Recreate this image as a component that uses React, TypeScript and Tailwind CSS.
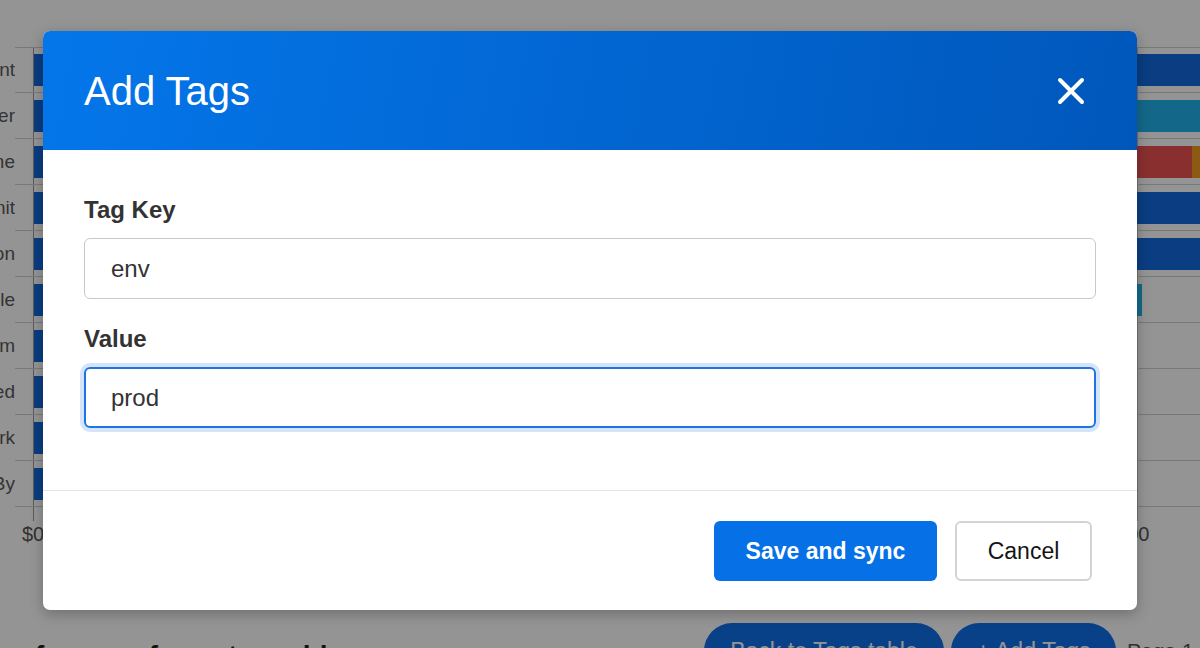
type Segment = { color: string; width: number };
type Row = { label: string; segments: Segment[] };

// stacked bars, widths in px from the axis
const rows: Row[] = [
  { label: 'Environment', segments: [{ color: 'bg-[#1269e0]', width: 1300 }] },
  { label: 'Owner', segments: [{ color: 'bg-[#1269e0]', width: 500 }, { color: 'bg-[#22b4ec]', width: 800 }] },
  {
    label: 'AvailabilityZone',
    segments: [
      { color: 'bg-[#1269e0]', width: 600 },
      { color: 'bg-[#ee5252]', width: 558 },
      { color: 'bg-[#f39c24]', width: 140 },
    ],
  },
  { label: 'BusinessUnit', segments: [{ color: 'bg-[#1269e0]', width: 1300 }] },
  { label: 'Application', segments: [{ color: 'bg-[#1269e0]', width: 1300 }] },
  { label: 'Lifecycle', segments: [{ color: 'bg-[#1269e0]', width: 700 }, { color: 'bg-[#22b4ec]', width: 408 }] },
  { label: 'Team', segments: [{ color: 'bg-[#1269e0]', width: 820 }] },
  { label: 'Untagged', segments: [{ color: 'bg-[#1269e0]', width: 640 }] },
  { label: 'Network', segments: [{ color: 'bg-[#1269e0]', width: 520 }] },
  { label: 'CreatedBy', segments: [{ color: 'bg-[#1269e0]', width: 380 }] },
];

const gridline =
  'bg-[linear-gradient(to_right,transparent_1103px,#c4c4c4_1103px,#c4c4c4_1104px,transparent_1104px)]';

function TagsChart() {
  return (
    <div className="pt-[47px]">
      {rows.map((row, i) => (
        <div key={row.label} className="flex h-[46px]">
          <div className="flex w-[135px] shrink-0 items-center justify-end overflow-hidden whitespace-nowrap text-[19px] text-[#5a5a5a]">
            {row.label}
          </div>
          <div
            className={`flex flex-1 border-b border-[#cfcfcf] ${i === 0 ? 'border-t' : ''}`}
          >
            <div className="w-[18px] shrink-0" />
            <div className={`flex flex-1 items-center border-l border-[#9a9a9a] ${gridline}`}>
              {row.segments.map((seg, j) => (
                <div key={j} className={`h-[32px] shrink-0 ${seg.color}`} style={{ width: seg.width }} />
              ))}
            </div>
          </div>
        </div>
      ))}
      <div className="flex h-[14px]">
        <div className="w-[153px] shrink-0" />
        <div className={`flex-1 border-l border-[#9a9a9a] ${gridline}`} />
      </div>
      <div className="flex text-[20px] leading-[26px] text-[#555]">
        <div className="w-[142px] shrink-0" />
        <span className="w-[1083px] shrink-0">$0</span>
        <span>$100</span>
      </div>
    </div>
  );
}

function PageFooter() {
  return (
    <div className="mt-[76px] flex items-start">
      <h3 className="w-[824px] shrink-0 whitespace-nowrap pt-[16px] text-[28px] font-bold leading-[34px] text-[#1f1f1f]">
        Top costs of names for untaggable resources
      </h3>
      <div className="flex shrink-0 items-center gap-[7px]">
        <button className="h-[56px] w-[240px] shrink-0 rounded-full bg-[#1170ea] text-[23px] text-white">
          Back to Tags table
        </button>
        <button className="h-[56px] w-[165px] shrink-0 rounded-full bg-[#1170ea] text-[23px] text-white">
          + Add Tags
        </button>
        <span className="ml-[4px] shrink-0 whitespace-nowrap text-[21px] text-[#555]">Page 1 of 3</span>
      </div>
    </div>
  );
}

function CloseIcon() {
  return (
    <svg width="28" height="28" viewBox="0 0 28 28" fill="none" stroke="white" strokeWidth="4" strokeLinecap="round">
      <path d="M3 3 L25 25 M25 3 L3 25" />
    </svg>
  );
}

function AddTagsModal() {
  return (
    <div className="ml-[43px] w-[1094px] overflow-hidden rounded-[7px] bg-white shadow-[0_4px_14px_rgba(0,0,0,0.25)]">
      <div className="flex h-[119px] items-center justify-between bg-[linear-gradient(100deg,#0476ea,#0057bb)] pl-[41px] pr-[52px]">
        <h2 className="text-[40px] font-normal leading-none text-white">Add Tags</h2>
        <CloseIcon />
      </div>

      <div className="px-[41px] pb-[62px] pt-[44px]">
        <label className="mb-[12px] block text-[24px] font-bold leading-[32px] text-[#333]">Tag Key</label>
        <input
          readOnly
          value="env"
          className="block h-[61px] w-full rounded-[6px] border border-[#c9c9c9] px-[26px] text-[24px] text-[#333] outline-none"
        />
        <label className="mb-[12px] mt-[24px] block text-[24px] font-bold leading-[32px] text-[#333]">Value</label>
        <input
          readOnly
          value="prod"
          className="block h-[61px] w-full rounded-[6px] border-2 border-[#1f73e3] px-[25px] text-[24px] text-[#333] outline-none ring-4 ring-[#d3e4fb]"
        />
      </div>

      <div className="flex justify-end gap-[18px] border-t border-[#e4e4e4] pb-[29px] pl-[41px] pr-[45px] pt-[30px]">
        <button className="h-[60px] w-[223px] rounded-[6px] bg-[#0670e7] text-[23px] font-bold text-white">
          Save and sync
        </button>
        <button className="h-[60px] w-[137px] rounded-[6px] border-2 border-[#d3d3d6] bg-white text-[23px] text-[#151515]">
          Cancel
        </button>
      </div>
    </div>
  );
}

export default function App() {
  return (
    <div className="relative h-[648px] w-[1200px] overflow-hidden bg-white font-['Liberation_Sans',Arial,sans-serif]">
      <div className="-ml-[120px] w-[1320px]">
        <TagsChart />
        <PageFooter />
      </div>

      <div className="absolute inset-0 bg-black/[0.42] pt-[31px]">
        <AddTagsModal />
      </div>
    </div>
  );
}
